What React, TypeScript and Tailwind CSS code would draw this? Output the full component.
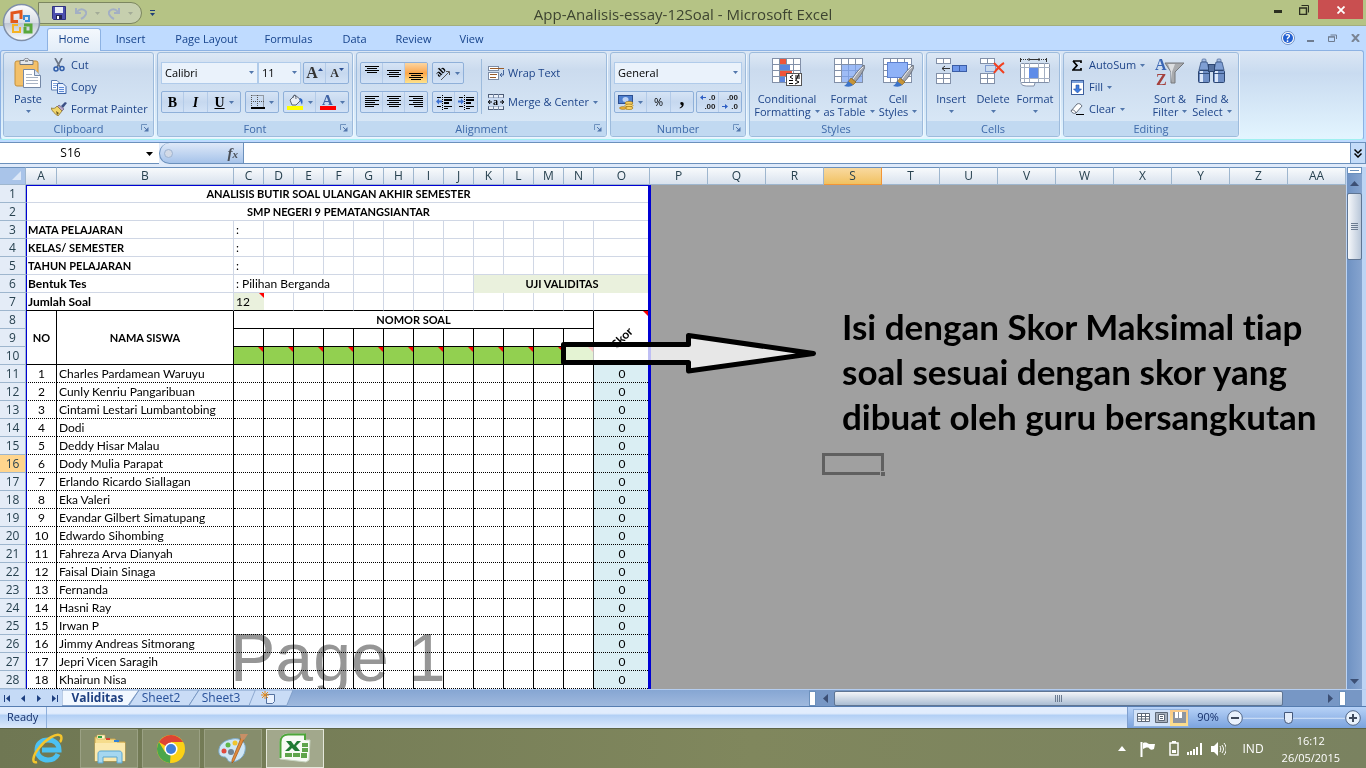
import React, { type ReactNode } from "react"

const students: string[] = [
    "Charles Pardamean Waruyu",
    "Cunly Kenriu Pangaribuan",
    "Cintami Lestari Lumbantobing",
    "Dodi",
    "Deddy Hisar Malau",
    "Dody Mulia Parapat",
    "Erlando Ricardo Siallagan",
    "Eka Valeri",
    "Evandar Gilbert Simatupang",
    "Edwardo Sihombing",
    "Fahreza Arva Dianyah",
    "Faisal Diain Sinaga",
    "Fernanda",
    "Hasni Ray",
    "Irwan P",
    "Jimmy Andreas Sitmorang",
    "Jepri Vicen Saragih",
    "Khairun Nisa",
]

const answerColumns = ["C", "D", "E", "F", "G", "H", "I", "J", "K", "L", "M", "N"]
const outsideColumns = ["P", "Q", "R", "S", "T", "U", "V", "W", "X", "Y", "Z", "AA"]
const headerColumns = ["A", "B", ...answerColumns, "O", ...outsideColumns]

const menuTabs = [
    { label: "Insert", width: "w-[58px]" },
    { label: "Page Layout", width: "w-[94px]" },
    { label: "Formulas", width: "w-[70px]" },
    { label: "Data", width: "w-[62px]" },
    { label: "Review", width: "w-[56px]" },
    { label: "View", width: "w-[60px]" },
]

/* ---------- small shared pieces ---------- */

const Caret = ({ className = "text-[#5277ac]" }: { className?: string }) => (
    <svg width="5" height="3" viewBox="0 0 5 3" className={`shrink-0 ${className}`}>
        <path d="M0 0h5L2.500 3z" fill="currentColor" />
    </svg>
)

const Launcher = () => (
    <svg width="8" height="8" viewBox="0 0 8 8" fill="none">
        <path d="M.5 6V.5H6" stroke="#6f93bf" />
        <path d="M3 3l3 3" stroke="#5277ac" />
        <path d="M7.500 3v4.500H3z" fill="#5277ac" />
    </svg>
)

interface GroupProps {
    label: string
    width: string
    launcher?: boolean
    children: ReactNode
}

const Group = ({ label, width, launcher, children }: GroupProps) => (
    <section className={`${width} flex h-[85px] shrink-0 flex-col overflow-hidden rounded-[3px] border border-[#9dbbdc] bg-linear-to-b from-[#dde8f5] via-[#cbdbee] via-20% to-[#dbeaf8] shadow-[1px_1px_0_#eef6fe]`}>
        <div className="flex flex-1 px-[3px] pt-px">{children}</div>
        <div className="relative flex h-[15px] items-center justify-center bg-[#c1d9f1] pt-px text-[11px] text-[#3e6aaa]">
            {label}
            {launcher && (
                <button aria-label={`${label} options`} className="absolute right-1 top-[3px]">
                    <Launcher />
                </button>
            )}
        </div>
    </section>
)

const ButtonBox = ({ children }: { children: ReactNode }) => (
    <div className="flex h-[22px] divide-x divide-[#b4cbe8] rounded-[2px] border border-[#8fb0d9] bg-linear-to-b from-[#d6e4f5] via-[#c6d8ef] to-[#d2e2f6]">
        {children}
    </div>
)

interface ToolProps {
    label: string
    width?: string
    active?: boolean
    caret?: boolean
    children: ReactNode
}

const Tool = ({ label, width = "w-[22px]", active, caret, children }: ToolProps) => (
    <button
        aria-label={label}
        className={`${width} flex items-center justify-center gap-1 text-black ${active ? "bg-linear-to-b from-[#fbd5a0] via-[#fba648] to-[#fde38c]" : ""}`}
    >
        {children}
        {caret && <Caret />}
    </button>
)

const SmallButton = ({ label, icon, caret }: { label: string, icon: ReactNode, caret?: boolean }) => (
    <button className="flex h-[22px] items-center gap-1 whitespace-nowrap">
        <span className="flex w-4 justify-center">{icon}</span>
        {label}
        {caret && <Caret />}
    </button>
)

const LargeButton = ({ lines, icon, width }: { lines: string[], icon: ReactNode, width: string }) => (
    <button className={`${width} flex shrink-0 flex-col items-center pt-[4px] leading-[13px]`}>
        <span className="flex h-[34px] items-start">{icon}</span>
        <span className="whitespace-nowrap">{lines[0]}</span>
        <span className="flex h-[13px] items-center gap-1 whitespace-nowrap">
            {lines[1]}
            <Caret />
        </span>
    </button>
)

const Combo = ({ label, value, width }: { label: string, value: string, width: string }) => (
    <label className={`${width} relative flex h-[22px]`}>
        <select
            aria-label={label}
            defaultValue={value}
            className="w-full appearance-none border border-[#b0cbea] bg-[#eaf2fb] px-[3px] text-[11px] text-black outline-none"
        >
            <option>{value}</option>
        </select>
        <span className="pointer-events-none absolute right-1 top-[9px]"><Caret /></span>
    </label>
)

/* ---------- ribbon icons ---------- */

const PasteIcon = () => (
    <svg width="28" height="32" viewBox="0 0 28 32">
        <rect x="1" y="3" width="23" height="25" rx="2" fill="#f3c069" stroke="#c4903c" />
        <path d="M6 2.500h4c0-3 5-3 5 0h4v4H6z" fill="#e4e7ec" stroke="#6f7681" />
        <path d="M11 3h3" stroke="#555" />
        <path d="M9.500 11.500h11l6 6v12h-17z" fill="#fff" stroke="#7488a6" />
        <path d="M20.500 11.500v6h6" fill="#dce6f4" stroke="#7488a6" />
        <path d="M12 16.500h6M12 19.500h12M12 22.500h12M12 25.500h12" stroke="#a9b4c4" />
    </svg>
)

const CutIcon = () => (
    <svg width="12" height="14" viewBox="0 0 12 14" fill="none">
        <path d="M2 0l5 9M9 0L4 9" stroke="#6b7585" strokeWidth="1.600" />
        <circle cx="3" cy="11" r="2" stroke="#2f5ca8" strokeWidth="1.500" />
        <circle cx="9" cy="10.500" r="2" stroke="#2f5ca8" strokeWidth="1.500" />
    </svg>
)

const CopyIcon = () => (
    <svg width="16" height="14" viewBox="0 0 16 14">
        <path d="M.5.5H6l3 3v6.500H.5z" fill="#fff" stroke="#5b7cb1" />
        <path d="M2 3.500h4M2 5.500h4M2 7.500h3" stroke="#7fa3dd" />
        <path d="M6.500 3.500H12l3 3v7H6.500z" fill="#eaf2ff" stroke="#3f66a8" />
        <path d="M8 7.500h5M8 9.500h5M8 11.500h5" stroke="#5c8ad6" />
    </svg>
)

const PainterIcon = () => (
    <svg width="16" height="14" viewBox="0 0 16 14">
        <path d="M10 4l4-4 2 1-4 5z" fill="#3b4f85" />
        <path d="M8 3l5 4-2 2-5-4z" fill="#b9a7c9" stroke="#66597a" strokeWidth=".7" />
        <path d="M6 4l5 5-4 5C4 12 1 9 0 6c3 1 5 0 6-2z" fill="#f1d56a" stroke="#8b7430" strokeWidth=".8" />
        <path d="M5 9l3 2-2 2z" fill="#6b5821" />
    </svg>
)

const Lines = ({ rows, y }: { rows: [number, number][], y: number }) => (
    <svg width="14" height="14" viewBox="0 0 14 14">
        {rows.map(([x, w], idx) => (
            <rect key={idx} x={x} y={y + idx * 2} width={w} height="1" fill="#000" />
        ))}
    </svg>
)

const shortRows: [number, number][] = [[0, 14], [2, 10], [0, 14], [2, 10]]
const leftRows: [number, number][] = [[0, 14], [0, 10], [0, 14], [0, 10], [0, 14], [0, 9]]
const centerRows: [number, number][] = [[0, 14], [2, 10], [0, 14], [2, 10], [0, 14], [2, 10]]
const rightRows: [number, number][] = [[0, 14], [4, 10], [0, 14], [4, 10], [0, 14], [5, 9]]

const IndentIcon = ({ out }: { out?: boolean }) => (
    <svg width="16" height="15" viewBox="0 0 16 15">
        <path d="M6.500 0v15" stroke="#000" strokeDasharray="1 1" />
        <path d="M1 2.500h4M8 2.500h8M1 11.500h4M8 11.500h8M8 13.500h4" stroke="#000" />
        <path d="M8 5h8M8 8h5" stroke="#000" strokeWidth="2" />
        {out
            ? <path d="M0 6.500L3 3.500v2h3v2H3v2z" fill="#3b6fd0" />
            : <path d="M6 6.500L3 3.500v2H0v2h3v2z" fill="#3b6fd0" />}
    </svg>
)

const OrientationIcon = () => (
    <svg width="15" height="15" viewBox="0 0 15 15" className="overflow-visible">
        <text x="1" y="9" fontSize="10" fontWeight="700" fontFamily="Liberation Serif, serif" transform="rotate(-45 5 8)">ab</text>
        <path d="M5 14l8-8M13.500 9V5.500H10" fill="none" stroke="#555" />
    </svg>
)

const BordersIcon = () => (
    <svg width="14" height="14" viewBox="0 0 14 14" fill="none">
        <path d="M.5.500h12v12M.5 0v12M6.500 0v12M0 6.500h13" stroke="#555" strokeDasharray="1 1" />
        <path d="M0 13h14" stroke="#000" strokeWidth="2" />
    </svg>
)

const FillIcon = () => (
    <svg width="17" height="16" viewBox="0 0 17 16">
        <path d="M3 6l5-5 6 5-5 5H5z" fill="#e8edf5" stroke="#5a6473" />
        <path d="M6 4c0-4 3-4 3 1" fill="none" stroke="#5a6473" />
        <path d="M13 4c3 1 3 3 2 7-1-2-1-4-3-5z" fill="#2d66c3" />
        <rect x="0" y="12" width="16" height="4" fill="#ffff00" />
    </svg>
)

const FontColorIcon = () => (
    <span className="flex flex-col items-center font-['Liberation_Serif',serif] text-[15px] leading-[12px] font-bold text-[#3f62a3]">
        A
        <span className="h-1 w-4 bg-[#ff0000]" />
    </span>
)

const WrapIcon = () => (
    <svg width="16" height="16" viewBox="0 0 16 16" fill="none">
        <rect x=".5" y="1.500" width="10" height="4" fill="#fff" stroke="#7c8ca6" />
        <path d="M2 3.500h14" stroke="#9a5b28" />
        <rect x=".5" y="7.500" width="10" height="7" fill="#fff" stroke="#7c8ca6" />
        <path d="M2 9.500h7M2 12.500h6" stroke="#9a5b28" />
        <path d="M15.500 5v5H12M14 8l-2 2 2 2" stroke="#44659b" />
    </svg>
)

const MergeIcon = () => (
    <svg width="16" height="16" viewBox="0 0 16 16">
        <rect x=".5" y=".5" width="15" height="15" fill="#e9f0fa" stroke="#4d5d78" />
        <path d="M5.500 0v4M10.500 0v4M5.500 12v4M10.500 12v4M0 4h16M0 12h16" stroke="#7789a6" />
        <rect x="0" y="4" width="16" height="8" fill="#c9daf2" />
        <path d="M0 8h4M2 6L.5 8 2 10M16 8h-4M14 6l1.500 2-1.500 2" fill="none" stroke="#000" />
        <text x="5" y="11" fontSize="10" fontWeight="700" fontFamily="Liberation Serif, serif">a</text>
    </svg>
)

const CurrencyIcon = () => (
    <svg width="16" height="15" viewBox="0 0 16 15">
        <rect x=".5" y=".5" width="14" height="8" fill="#4f7fce" stroke="#2c4f92" />
        <ellipse cx="7.500" cy="4.500" rx="3" ry="2.500" fill="#bcd2f6" />
        <ellipse cx="11" cy="8" rx="4" ry="1.500" fill="#ffd86b" stroke="#9c7212" strokeWidth=".7" />
        <ellipse cx="11" cy="10.500" rx="4" ry="1.500" fill="#ffd86b" stroke="#9c7212" strokeWidth=".7" />
        <ellipse cx="11" cy="13" rx="4" ry="1.500" fill="#ffd86b" stroke="#9c7212" strokeWidth=".7" />
        <ellipse cx="5" cy="13" rx="3.500" ry="1.300" fill="#f4b73c" stroke="#9c7212" strokeWidth=".7" />
    </svg>
)

const DecimalIcon = ({ more }: { more?: boolean }) => (
    <span className="relative flex w-4 flex-col font-['Liberation_Sans',sans-serif] text-[8px] leading-[9px] font-bold text-[#222]">
        <span className="self-end">{more ? ".0" : ".00"}</span>
        <span className="self-end">{more ? ".00" : ".0"}</span>
        <svg width="6" height="5" viewBox="0 0 6 5" className={more ? "absolute left-0 top-0.5" : "absolute left-0 bottom-0.5"}>
            <path d={more ? "M0 2.500L3 0v2h3v1H3v2z" : "M6 2.500L3 0v2H0v1h3v2z"} fill="#2f5fc4" />
        </svg>
    </span>
)

const Grid = ({ x = 0, y = 0, cols, rows, cw, ch }: { x?: number, y?: number, cols: number, rows: number, cw: number, ch: number }) => (
    <g>
        <rect x={x + 0.5} y={y + 0.5} width={cols * cw} height={rows * ch} fill="#fff" stroke="#8290a8" />
        {Array.from({ length: cols - 1 }, (_, i) => (
            <path key={`c${i}`} d={`M${x + 0.5 + (i + 1) * cw} ${y}v${rows * ch}`} stroke="#8290a8" />
        ))}
        {Array.from({ length: rows - 1 }, (_, i) => (
            <path key={`r${i}`} d={`M${x} ${y + 0.5 + (i + 1) * ch}h${cols * cw}`} stroke="#8290a8" />
        ))}
    </g>
)

const Brush = () => (
    <g>
        <path d="M30 7c-4 3-9 9-12 14l3 3c4-4 8-10 10-15z" fill="#a6a9b0" stroke="#5e6470" strokeWidth=".8" />
        <path d="M29 9c-4 3-7 8-10 12" fill="none" stroke="#f2f3f5" />
        <path d="M17 20l5 4-3 3-5-3z" fill="#c79538" stroke="#7d5a1c" strokeWidth=".6" />
        <path d="M14 23l5 4c-2 2-5 2-9 1 2-1 3-3 4-5z" fill="#3d74c9" />
    </g>
)

const ConditionalIcon = () => (
    <svg width="30" height="29" viewBox="0 0 30 29">
        <Grid cols={4} rows={4} cw={7} ch={6} />
        <rect x="8" y="1" width="6" height="5" fill="#f0553a" />
        <rect x="8" y="7" width="10" height="5" fill="#5b86df" />
        <rect x="8" y="13" width="12" height="5" fill="#f0553a" />
        <rect x="8" y="19" width="5" height="5" fill="#5b86df" />
        <rect x="14.500" y="15.500" width="15" height="12" fill="#fff" stroke="#555" />
        <path d="M21 17l-3 2 3 2M17 22.500h4M17 25.500h4M23 18h5M23 20h5M27 16l-3 6M23 22l4 2-4 2" fill="none" stroke="#000" />
    </svg>
)

const TableIcon = () => (
    <svg width="31" height="29" viewBox="0 0 31 29">
        <Grid cols={4} rows={4} cw={7} ch={6} />
        <rect x="8" y="7" width="20" height="17" fill="#7ea6f3" opacity=".75" />
        <Brush />
    </svg>
)

const CellStylesIcon = () => (
    <svg width="31" height="29" viewBox="0 0 31 29">
        <Grid cols={4} rows={4} cw={7} ch={6} />
        <rect x="4.500" y="4.500" width="20" height="15" fill="#8fb2f7" stroke="#5c7fcf" />
        <Brush />
    </svg>
)

const InsertIcon = () => (
    <svg width="31" height="29" viewBox="0 0 31 29">
        <Grid cols={2} rows={1} cw={7} ch={5} />
        <Grid y={15} cols={2} rows={2} cw={7} ch={5} />
        <rect x="16.500" y="7.500" width="14" height="6" fill="#6e97ea" stroke="#3a5da6" />
        <path d="M23.500 7v7" stroke="#3a5da6" />
        <path d="M6 10.500h8M9 8l-3 2.500L9 13" fill="none" stroke="#333" />
    </svg>
)

const DeleteIcon = () => (
    <svg width="26" height="29" viewBox="0 0 26 29">
        <Grid cols={2} rows={1} cw={7} ch={5} />
        <Grid y={15} cols={2} rows={2} cw={7} ch={5} />
        <path d="M5.500 7.500h10v6h-10z" fill="none" stroke="#335db5" strokeDasharray="1 1" />
        <path d="M14 5c3 3 6 6 10 10M24 5c-4 2-7 6-10 10" fill="none" stroke="#f2401f" strokeWidth="2" />
    </svg>
)

const FormatIcon = () => (
    <svg width="31" height="30" viewBox="0 0 31 30">
        <path d="M1 1.500h26" stroke="#333" strokeDasharray="1 1" />
        <path d="M9 1.500h10M9 0v3M19 0v3M.5 0v4M26.500 0v4" stroke="#333" />
        <rect x=".5" y="5.500" width="29" height="19" rx="1" fill="#fff" stroke="#8290a8" />
        <path d="M4.500 5v19M9.500 5v19M18.500 5v19M24.500 5v19M0 9.500h30M0 20.500h30" stroke="#a4afc2" />
        <rect x="9" y="10" width="9" height="10" fill="#5f8ce8" />
        <path d="M1 25c0 3 6 3 6 3h7l1-3" fill="#fff" stroke="#8290a8" />
    </svg>
)

const SortIcon = () => (
    <svg width="30" height="30" viewBox="0 0 30 30" className="overflow-visible">
        <text x="0" y="12" fontSize="16" fontWeight="700" fontFamily="Liberation Serif, serif" fill="#3a66b4">A</text>
        <text x="1" y="27" fontSize="16" fontWeight="700" fontFamily="Liberation Serif, serif" fill="#a4403d">Z</text>
        <path d="M10 5h19l-9 9v11h-4V14z" fill="#a9abae" stroke="#76797d" />
        <path d="M13 6h7l-3 8v10l-1-10z" fill="#dcdee0" />
    </svg>
)

const FindIcon = () => (
    <svg width="28" height="28" viewBox="0 0 28 28">
        {[0, 15].map((x) => (
            <g key={x} transform={`translate(${x} 0)`}>
                <rect x="4" y="1" width="4" height="3" rx="1" fill="#a8bfe4" stroke="#4c6798" strokeWidth=".7" />
                <path d="M3 4h6l2 8H1z" fill="#7f9fd3" stroke="#35517f" strokeWidth=".8" />
                <rect x=".5" y="12.500" width="11" height="12" rx="1" fill="#6f8fc6" stroke="#2d4773" />
                <rect x="2" y="13" width="3" height="11" fill="#dbe7fa" />
                <path d="M1 15.500h10" stroke="#35517f" />
            </g>
        ))}
        <rect x="10.500" y="6.500" width="6" height="7" fill="#55719f" stroke="#2d4773" />
    </svg>
)

const SigmaIcon = () => (
    <svg width="11" height="11" viewBox="0 0 11 11">
        <path d="M1 1h8v2M1 1l4 4.500L1 10h8V8" fill="none" stroke="#000" strokeWidth="1.700" />
    </svg>
)

const FillDownIcon = () => (
    <svg width="13" height="15" viewBox="0 0 13 15">
        <rect x=".5" y=".5" width="12" height="14" fill="#fff" stroke="#3c5f9e" />
        <path d="M1 2h11" stroke="#7da2dc" strokeWidth="2" />
        <path d="M5 5h3v4h2.500l-4 4-4-4H5z" fill="#3e7ce0" stroke="#244f9f" strokeWidth=".6" />
    </svg>
)

const ClearIcon = () => (
    <svg width="14" height="12" viewBox="0 0 14 12">
        <path d="M1 8l6-7c2-1 4 0 5 2l-6 7c-2 1-4 0-5-2z" fill="#fff" stroke="#66707f" />
        <path d="M1 8c1-2 4-1 5 2" fill="none" stroke="#66707f" />
        <path d="M6 11.500h8" stroke="#000" />
    </svg>
)

/* ---------- window chrome ---------- */

const OfficeButton = () => (
    <button aria-label="Office" className="absolute left-[2px] top-[3px] z-10">
        <svg width="39" height="39" viewBox="0 0 39 39">
            <defs>
                <linearGradient id="orb" x1="0" y1="0" x2="0" y2="1">
                    <stop offset="0" stopColor="#fdfdfe" />
                    <stop offset=".5" stopColor="#d8dde5" />
                    <stop offset=".52" stopColor="#bec6d3" />
                    <stop offset="1" stopColor="#fbfdff" />
                </linearGradient>
            </defs>
            <circle cx="19.500" cy="19.500" r="18" fill="url(#orb)" stroke="#7f8fa8" strokeWidth="1.500" />
            <g fill="none" strokeWidth="3">
                <path d="M16 18.500h-6V10l9-1.500V16" stroke="#e2571b" />
                <path d="M22 17v-4h5v5h-4" stroke="#3c8ed8" strokeWidth="2" />
                <path d="M16 22h-5v7h7v-5" stroke="#f5b324" strokeWidth="2" />
                <path d="M22 22h7v7h-6v-5" stroke="#59a83b" />
            </g>
        </svg>
    </button>
)

const TitleBar = () => (
    <header className="relative flex h-[26px] border-b border-[#a3ae7d] bg-[#b5c385]">
        <div className="ml-[38px] mt-[2px] flex h-[22px] w-[104px] items-center rounded-r-full border border-[#7c8660] bg-[#c6cfae] pl-[13px]">
            <button aria-label="Save">
                <svg width="14" height="14" viewBox="0 0 14 14">
                    <path d="M.5.500h13v13h-12l-1-1z" fill="#4c4fae" stroke="#2f327f" />
                    <rect x="3" y="1" width="8" height="6" fill="#e8edf8" />
                    <rect x="4" y="9" width="6" height="4" fill="#22244e" />
                    <rect x="5" y="10" width="2" height="3" fill="#fff" />
                </svg>
            </button>
            <button aria-label="Undo" className="ml-[9px] flex items-center gap-2">
                <svg width="12" height="13" viewBox="0 0 12 13" fill="none">
                    <path d="M1 1v5h5M2 5c4-5 10-2 9 2-1 3-3 4-5 5" stroke="#a3afc4" strokeWidth="2" />
                </svg>
                <Caret className="text-[#a3ab98]" />
            </button>
            <button aria-label="Redo" className="ml-2 flex items-center gap-2">
                <svg width="12" height="13" viewBox="0 0 12 13" fill="none">
                    <path d="M11 1v5H6M10 5C6 0 0 3 1 7c1 3 3 4 5 5" stroke="#a3afc4" strokeWidth="2" />
                </svg>
                <Caret className="text-[#a3ab98]" />
            </button>
        </div>
        <button aria-label="Customize Quick Access Toolbar" className="ml-2 flex flex-col items-center justify-center gap-0.5">
            <span className="h-px w-[5px] bg-[#1f3f78]" />
            <Caret className="text-[#1f3f78]" />
        </button>
        <h1 className="absolute inset-x-0 top-1 text-center text-[15px] leading-5 text-[#3d4430]">App-Analisis-essay-12Soal - Microsoft Excel</h1>
        <div className="relative ml-auto mr-[3px] flex h-[19px] items-center">
            <button aria-label="Minimize" className="mr-[17px] mt-1 h-[3px] w-2 bg-[#2b2f20]" />
            <button aria-label="Restore" className="mr-[9px]">
                <svg width="10" height="10" viewBox="0 0 10 10" fill="none" stroke="#2b2f20">
                    <path d="M.5 3h7v6.500h-7zM0 3h8" strokeWidth="1.500" />
                    <path d="M2.500.5h7v7" />
                </svg>
            </button>
            <button aria-label="Close" className="flex h-[19px] w-[45px] items-center justify-center bg-[#c94f50]">
                <svg width="8" height="8" viewBox="0 0 8 8"><path d="M.5.5l7 7M7.500.5l-7 7" stroke="#fff" strokeWidth="1.800" /></svg>
            </button>
        </div>
    </header>
)

const MenuTabs = () => (
    <nav className="flex h-6 items-end bg-[#bfdbff] pl-[47px] text-[11px] text-[#15428b]">
        <button className="relative z-10 -mb-px h-[23px] w-[54px] rounded-t-[3px] border border-b-0 border-[#8db2e3] bg-linear-to-b from-[#f4f8fd] to-[#e3edf8] pb-[2px]">Home</button>
        {menuTabs.map((tab) => (
            <button key={tab.label} className={`${tab.width} h-[23px] pl-px pt-px`}>{tab.label}</button>
        ))}
        <div className="ml-auto flex h-6 items-center pr-[6px]">
            <button aria-label="Help" className="mr-3">
                <svg width="14" height="14" viewBox="0 0 14 14">
                    <circle cx="7" cy="7" r="6.500" fill="#fff" stroke="#6d8fc4" />
                    <circle cx="7" cy="7" r="5" fill="#2360d2" />
                    <text x="7" y="11" fontSize="10" fontWeight="700" textAnchor="middle" fill="#fff">?</text>
                </svg>
            </button>
            <button aria-label="Minimize workbook" className="mr-[14px] mt-[6px] h-[2px] w-[7px] bg-[#6f7c90]" />
            <button aria-label="Restore workbook" className="mr-[14px]">
                <svg width="9" height="8" viewBox="0 0 9 8" fill="none" stroke="#6f7c90">
                    <path d="M.5 3h6v4.500h-6zM0 2.800h7M2.500 1h6v4" />
                </svg>
            </button>
            <button aria-label="Close workbook">
                <svg width="9" height="8" viewBox="0 0 9 8"><path d="M1 0l7 8M8 0L1 8" stroke="#7a8494" strokeWidth="2" /></svg>
            </button>
        </div>
    </nav>
)

const Ribbon = () => (
    <div className="bg-[#bfdbff] pb-[2px]">
        <div className="mr-[2px] flex h-[90px] gap-[3px] rounded-[3px] border border-[#8db2e3] border-b-[#9ff0f0] bg-linear-to-b from-[#dbe6f4] via-[#c9dbf0] via-25% to-[#e3f5ff] pl-[2px] pt-px text-[11px] text-[#1d4489]">
            <Group label="Clipboard" width="w-[151px]" launcher>
                <LargeButton width="w-[42px]" lines={["Paste", ""]} icon={<PasteIcon />} />
                <div className="pl-[2px]">
                    <SmallButton label="Cut" icon={<CutIcon />} />
                    <SmallButton label="Copy" icon={<CopyIcon />} />
                    <SmallButton label="Format Painter" icon={<PainterIcon />} />
                </div>
            </Group>
            <Group label="Font" width="w-[196px]" launcher>
                <div className="flex flex-1 flex-col gap-[7px] pt-[8px]">
                    <div className="flex">
                        <Combo label="Font name" value="Calibri" width="w-[97px]" />
                        <Combo label="Font size" value="11" width="w-[43px]" />
                        <div className="ml-auto">
                            <ButtonBox>
                                <Tool label="Grow font">
                                    <span className="font-['Liberation_Serif',serif] text-[16px] font-bold text-[#333]">A</span>
                                    <svg width="5" height="3" className="-ml-1 mb-2"><path d="M0 3h5L2.500 0z" fill="#2c4f92" /></svg>
                                </Tool>
                                <Tool label="Shrink font">
                                    <span className="font-['Liberation_Serif',serif] text-[12px] font-bold text-[#333]">A</span>
                                    <svg width="5" height="3" className="-ml-1 mb-2"><path d="M0 0h5L2.500 3z" fill="#2c4f92" /></svg>
                                </Tool>
                            </ButtonBox>
                        </div>
                    </div>
                    <div className="flex justify-between font-['Liberation_Serif',serif] text-[14px] font-bold">
                        <ButtonBox>
                            <Tool label="Bold">B</Tool>
                            <Tool label="Italic" width="w-6"><i>I</i></Tool>
                            <Tool label="Underline" width="w-8" caret><u>U</u></Tool>
                        </ButtonBox>
                        <ButtonBox>
                            <Tool label="Borders" width="w-8" caret><BordersIcon /></Tool>
                        </ButtonBox>
                        <ButtonBox>
                            <Tool label="Fill color" width="w-8" caret><FillIcon /></Tool>
                            <Tool label="Font color" width="w-8" caret><FontColorIcon /></Tool>
                        </ButtonBox>
                    </div>
                </div>
            </Group>
            <Group label="Alignment" width="w-[251px]" launcher>
                <div className="mb-[7px] mt-[5px] flex w-[122px] flex-col gap-[7px] border-r border-[#9dbbdc] pt-[3px]">
                    <div className="flex gap-1">
                        <ButtonBox>
                            <Tool label="Top align"><Lines rows={shortRows} y={0} /></Tool>
                            <Tool label="Middle align"><Lines rows={shortRows} y={4} /></Tool>
                            <Tool label="Bottom align" active><Lines rows={shortRows} y={7} /></Tool>
                        </ButtonBox>
                        <ButtonBox>
                            <Tool label="Orientation" width="w-[30px]" caret><OrientationIcon /></Tool>
                        </ButtonBox>
                    </div>
                    <div className="flex gap-1">
                        <ButtonBox>
                            <Tool label="Align left"><Lines rows={leftRows} y={1} /></Tool>
                            <Tool label="Align center"><Lines rows={centerRows} y={1} /></Tool>
                            <Tool label="Align right"><Lines rows={rightRows} y={1} /></Tool>
                        </ButtonBox>
                        <ButtonBox>
                            <Tool label="Decrease indent"><IndentIcon out /></Tool>
                            <Tool label="Increase indent"><IndentIcon /></Tool>
                        </ButtonBox>
                    </div>
                </div>
                <div className="flex flex-col gap-[7px] pl-[6px] pt-[8px]">
                    <SmallButton label="Wrap Text" icon={<WrapIcon />} />
                    <SmallButton label="Merge & Center" icon={<MergeIcon />} caret />
                </div>
            </Group>
            <Group label="Number" width="w-[136px]" launcher>
                <div className="flex flex-1 flex-col gap-[7px] pt-[8px]">
                    <Combo label="Number format" value="General" width="w-full" />
                    <div className="flex justify-between">
                        <ButtonBox>
                            <Tool label="Accounting format" width="w-8" caret><CurrencyIcon /></Tool>
                            <Tool label="Percent" width="w-6">%</Tool>
                            <Tool label="Comma"><b className="pb-2 font-['Liberation_Serif',serif] text-[20px] leading-3">,</b></Tool>
                        </ButtonBox>
                        <ButtonBox>
                            <Tool label="Increase decimal"><DecimalIcon more /></Tool>
                            <Tool label="Decrease decimal"><DecimalIcon /></Tool>
                        </ButtonBox>
                    </div>
                </div>
            </Group>
            <Group label="Styles" width="w-[174px]">
                <LargeButton width="w-[68px]" lines={["Conditional", "Formatting"]} icon={<ConditionalIcon />} />
                <LargeButton width="w-[56px]" lines={["Format", "as Table"]} icon={<TableIcon />} />
                <LargeButton width="w-[42px]" lines={["Cell", "Styles"]} icon={<CellStylesIcon />} />
            </Group>
            <Group label="Cells" width="w-[134px]">
                <LargeButton width="w-[42px]" lines={["Insert", ""]} icon={<InsertIcon />} />
                <LargeButton width="w-[42px]" lines={["Delete", ""]} icon={<DeleteIcon />} />
                <LargeButton width="w-[42px]" lines={["Format", ""]} icon={<FormatIcon />} />
            </Group>
            <Group label="Editing" width="w-[176px]">
                <div className="w-[82px] pl-[2px]">
                    <SmallButton label="AutoSum" icon={<SigmaIcon />} caret />
                    <SmallButton label="Fill" icon={<FillDownIcon />} caret />
                    <SmallButton label="Clear" icon={<ClearIcon />} caret />
                </div>
                <LargeButton width="w-[42px]" lines={["Sort &", "Filter"]} icon={<SortIcon />} />
                <LargeButton width="w-[42px]" lines={["Find &", "Select"]} icon={<FindIcon />} />
            </Group>
        </div>
    </div>
)

const FormulaBar = () => (
    <div className="flex h-[25px] border-t border-[#6b90bc] bg-[#dfeafa] pb-[3px]">
        <label className="relative flex w-[159px] border-b border-[#6b90bc] bg-white">
            <input aria-label="Name box" defaultValue="S16" className="w-[141px] bg-transparent text-center text-[12px] text-black outline-none" />
            <svg width="7" height="4" viewBox="0 0 7 4" className="absolute left-[146px] top-[9px]"><path d="M0 0h7L3.500 4z" /></svg>
        </label>
        <div className="flex w-[85px] items-center justify-between rounded-l-full border border-t-0 border-[#6b90bc] bg-linear-to-b from-[#dfe9f8] to-[#a6c3ea] pl-1 pr-[5px]">
            <span className="size-[9px] rounded-full border border-[#9fb4d1] bg-[#d3dae6]" />
            <button aria-label="Insert function" className="font-['Liberation_Serif',serif] text-[15px] leading-5 font-bold text-[#4a4f58] italic">f<span className="text-[11px]">x</span></button>
        </div>
        <input aria-label="Formula" className="flex-1 border-b border-[#6b90bc] bg-white outline-none" />
        <button aria-label="Expand formula bar" className="flex w-4 items-center justify-center border border-t-0 border-[#6b90bc] bg-[#c4dcf9]">
            <svg width="8" height="9" viewBox="0 0 8 9" fill="none" stroke="#000" strokeWidth="1.500"><path d="M.5.500L4 4l3.500-3.500M.5 4.500L4 8l3.500-3.500" /></svg>
        </button>
    </div>
)

/* ---------- worksheet ---------- */

const gridLine = "border-r border-b border-[#d0d7e5]"
const solid = "border-r border-b border-black"
const capital = "text-center text-[11px] font-bold"

// last printed column carries the right part of the page break line
const pageEdge = "relative border-l border-[#0000d4] bg-[#a0a0a0] shadow-[-2px_0_0_#0000d4]"

const Note = () => (
    <svg width="5" height="5" viewBox="0 0 5 5" className="absolute right-0 top-0"><path d="M0 0h5v5z" fill="#ff0000" /></svg>
)

const RowHead = ({ n }: { n: number }) => (
    <th className={`border-r border-b border-[#9eb6ce] text-center font-['Open_Sans',sans-serif] font-normal text-[#27414f] ${n === 16 ? "bg-[#ffd58d]" : "bg-[#e4ecf7]"}`}>{n}</th>
)

const Outside = ({ n }: { n: number }) => {
    if (n !== 16) {
        return <td colSpan={12} className={pageEdge} />
    }
    return (
        <>
            <td colSpan={3} className={pageEdge} />
            <td className="relative z-10 bg-[#a0a0a0]">
                <span className="absolute -inset-x-[2px] -inset-y-[2px] border-[3px] border-[#606060]" />
                <span className="absolute -right-[3px] -bottom-[3px] size-[5px] border-t border-l border-[#a0a0a0] bg-[#606060]" />
            </td>
            <td colSpan={8} className="bg-[#a0a0a0]" />
        </>
    )
}

const SheetTable = () => (
    <table className="w-full table-fixed border-separate border-spacing-0 bg-white font-['Lato',sans-serif] text-[12px] leading-[17px] text-black [&_td]:p-0 [&_th]:p-0">
        <colgroup>
            <col className="w-[26px]" />
            <col className="w-[31px]" />
            <col className="w-[177px]" />
            {answerColumns.map((c) => <col key={c} className="w-[30px]" />)}
            <col className="w-[56px]" />
            {outsideColumns.map((c) => <col key={c} className={c === "AA" ? "" : "w-[58px]"} />)}
        </colgroup>
        <thead>
            <tr className="h-[18px] font-['Open_Sans',sans-serif] text-[#27414f]">
                <th className="relative border-t border-r border-b border-[#9eb6ce] border-t-[#6b90bc] bg-[#a9c4e9]">
                    <svg width="9" height="9" viewBox="0 0 9 9" className="absolute right-1 bottom-1"><path d="M9 0v9H0z" fill="#dce7f7" /></svg>
                </th>
                {headerColumns.map((c) => (
                    <th
                        key={c}
                        className={`border-t border-r border-b border-t-[#6b90bc] text-center leading-4 font-normal ${c === "S" ? "border-[#f29536] bg-linear-to-b from-[#f9d99f] to-[#f1c15f]" : "border-[#9eb6ce] bg-linear-to-b from-[#f8fafc] to-[#d9e2ee]"}`}
                    >
                        {c}
                    </th>
                ))}
            </tr>
        </thead>
        <tbody>
            <tr className="h-[18px]">
                <RowHead n={1} />
                <td colSpan={15} className={`border-t border-b border-l border-[#0000d4] border-b-[#d0d7e5] leading-4 ${capital}`}>ANALISIS BUTIR SOAL ULANGAN AKHIR SEMESTER</td>
                <Outside n={1} />
            </tr>
            <tr className="h-[18px]">
                <RowHead n={2} />
                <td colSpan={15} className={`border-b border-l border-[#0000d4] border-b-[#d0d7e5] ${capital}`}>SMP NEGERI 9 PEMATANGSIANTAR</td>
                <Outside n={2} />
            </tr>
            {["MATA PELAJARAN", "KELAS/ SEMESTER", "TAHUN PELAJARAN"].map((title, idx) => (
                <tr key={title} className="h-[18px]">
                    <RowHead n={idx + 3} />
                    <td colSpan={2} className={`${gridLine} border-l border-l-[#0000d4] text-[11px]`}><b className="pl-px">{title}</b></td>
                    {answerColumns.map((c) => (
                        <td key={c} className={gridLine}>{c === "C" && <span className="pl-[2px]">:</span>}</td>
                    ))}
                    <td className="border-b border-[#d0d7e5]" />
                    <Outside n={idx + 3} />
                </tr>
            ))}
            <tr className="h-[18px]">
                <RowHead n={6} />
                <td colSpan={2} className={`${gridLine} border-l border-l-[#0000d4]`}><b className="pl-px">Bentuk Tes</b></td>
                <td colSpan={4} className={`${gridLine} whitespace-nowrap`}><span className="pl-[2px]">: Pilihan Berganda</span></td>
                {["G", "H", "I", "J"].map((c) => <td key={c} className={gridLine} />)}
                <td colSpan={5} className={`border-b border-[#eaf1dd] bg-[#eaf1dd] ${capital}`}>UJI VALIDITAS</td>
                <Outside n={6} />
            </tr>
            <tr className="h-[18px]">
                <RowHead n={7} />
                <td colSpan={2} className="border-r border-b border-l border-[#d0d7e5] border-b-black border-l-[#0000d4]"><b className="pl-px">Jumlah Soal</b></td>
                <td className="relative border-b border-black bg-[#eaf1dd]"><span className="pl-[2px]">12</span><Note /></td>
                {answerColumns.slice(1).map((c) => <td key={c} className="border-r border-b border-[#d0d7e5] border-b-black" />)}
                <td className="border-b border-black" />
                <Outside n={7} />
            </tr>
            <tr className="h-[18px]">
                <RowHead n={8} />
                <td rowSpan={3} className={`${solid} border-l border-l-[#0000d4] ${capital}`}>NO</td>
                <td rowSpan={3} className={`${solid} ${capital}`}>NAMA SISWA</td>
                <td colSpan={12} className={`${solid} ${capital}`}>NOMOR SOAL</td>
                <td rowSpan={3} className="relative border-b border-black text-center font-bold">
                    <span className="inline-block -rotate-45">Skor</span>
                    <span className="absolute right-[2px] top-0 size-[5px]"><Note /></span>
                </td>
                <Outside n={8} />
            </tr>
            <tr className="h-[18px]">
                <RowHead n={9} />
                {answerColumns.map((c) => <td key={c} className={solid} />)}
                <Outside n={9} />
            </tr>
            <tr className="h-[18px]">
                <RowHead n={10} />
                {answerColumns.map((c) => <td key={c} className={`${solid} relative bg-[#92d050]`}><Note /></td>)}
                <Outside n={10} />
            </tr>
            {students.map((name, idx) => (
                <tr key={name} className="h-[18px]">
                    <RowHead n={idx + 11} />
                    <td className="border-r border-b border-l border-black border-b-black border-l-[#0000d4] text-center [border-bottom-style:dotted]">{idx + 1}</td>
                    <td className="border-r border-b border-black whitespace-nowrap [border-bottom-style:dotted]"><span className="pl-[2px]">{name}</span></td>
                    {answerColumns.map((c) => <td key={c} className="border-r border-b border-black [border-bottom-style:dotted]" />)}
                    <td className="border-b border-dotted border-black bg-[#daeef3] text-center">0</td>
                    <Outside n={idx + 11} />
                </tr>
            ))}
        </tbody>
    </table>
)

const Sheet = () => (
    <div className="flex border-b border-[#b4cdf0] bg-[#bcd4f4]">
        <div className="relative min-w-0 flex-1 overflow-hidden">
            <SheetTable />
            {/* page break watermark */}
            <span className="absolute left-[230px] top-[450px] font-['Liberation_Sans',sans-serif] text-[68px] leading-[80px] whitespace-nowrap text-[#969696] mix-blend-multiply">Page 1</span>
            {/* drawing objects on the sheet */}
            <svg width="258" height="44" viewBox="0 0 258 44" className="absolute left-[560px] top-[164px]">
                <path d="M3.500 13.500h125v-9l125 18-125 17.500v-8.500h-125z" fill="#fff" fillOpacity=".75" stroke="#000" strokeWidth="5" strokeLinejoin="round" />
            </svg>
            <p className="absolute left-[842px] top-[137px] font-['Lato',sans-serif] text-[35px] leading-[45px] font-bold whitespace-nowrap text-black [font-variant-ligatures:none]">
                Isi dengan Skor Maksimal tiap<br />
                soal sesuai dengan skor yang<br />
                dibuat oleh guru bersangkutan
            </p>
        </div>
        <div className="mr-1 flex w-4 flex-col border-l border-[#bcd4f4] bg-linear-to-r from-[#6f92c3] to-[#86a4cf]">
            <div className="h-[7px] border border-[#6b90bc] bg-white p-[2px]"><div className="h-px bg-[#6b90bc]" /></div>
            <button aria-label="Scroll up" className="flex h-[19px] items-center justify-center">
                <svg width="9" height="5" viewBox="0 0 9 5"><path d="M0 5h9L4.500 0z" fill="#3c4f74" /></svg>
            </button>
            <div className="flex h-[67px] flex-col items-center justify-center gap-px rounded-[2px] border border-[#5f7593] bg-linear-to-r from-[#f5f7fa] to-[#b9c7d9]">
                {[0, 1, 2, 3].map((i) => <span key={i} className="h-px w-[7px] bg-[#6b7b90]" />)}
            </div>
            <button aria-label="Scroll down" className="mt-auto flex h-4 items-center justify-center">
                <svg width="9" height="5" viewBox="0 0 9 5"><path d="M0 0h9L4.500 5z" fill="#3c4f74" /></svg>
            </button>
        </div>
    </div>
)

/* ---------- bottom bars ---------- */

const NavIcon = ({ d }: { d: string }) => (
    <svg width="7" height="7" viewBox="0 0 7 7"><path d={d} fill="#1d3f80" /></svg>
)

const SheetTab = ({ label, width, active }: { label: ReactNode, width: string, active?: boolean }) => (
    <button className={`${width} relative -mr-[10px] h-4 text-[12px] leading-4 ${active ? "z-10 font-bold text-[#1d3f80]" : "text-[#27509a]"}`}>
        <svg viewBox="0 0 70 16" preserveAspectRatio="none" className="absolute inset-0 h-full w-full">
            <path d={active ? "M0 0h70L60 15.500H0z" : "M10 0h60L60 15.500H0z"} fill={active ? "#f2f8ff" : "#c9dcf6"} stroke="#6f8fbd" strokeWidth=".8" />
        </svg>
        <span className="relative flex items-center justify-center pr-[6px]">{label}</span>
    </button>
)

const SheetBar = () => (
    <div className="flex h-[17px] border-b border-[#567db1] bg-linear-to-b from-[#86a6d3] to-[#9fb9de]">
        <div className="flex w-[62px] items-center justify-around bg-[#c5daf6]">
            <button aria-label="First sheet"><NavIcon d="M0 0h1v7H0zM6 0v7L2 3.500z" /></button>
            <button aria-label="Previous sheet"><NavIcon d="M5 0v7L1 3.500z" /></button>
            <button aria-label="Next sheet"><NavIcon d="M2 0v7l4-3.500z" /></button>
            <button aria-label="Last sheet"><NavIcon d="M1 0v7l4-3.500zM6 0h1v7H6z" /></button>
        </div>
        <SheetTab label="Validitas" width="w-[77px]" active />
        <SheetTab label="Sheet2" width="w-[70px]" />
        <SheetTab label="Sheet3" width="w-[70px]" />
        <SheetTab
            width="w-[44px]"
            label={
                <svg width="15" height="14" viewBox="0 0 15 14" role="img" aria-label="Insert worksheet">
                    <path d="M5.500 3.500h8v7l-2 2h-6z" fill="#eaf2ff" stroke="#53709f" />
                    <path d="M4 0v8M0 4h8M1 1l6 6M7 1L1 7" stroke="#e08a1c" />
                </svg>
            }
        />
        <div className="ml-auto flex w-[537px] items-center bg-[#7797c5]">
            <span className="h-[15px] w-[7px] shrink-0 border border-[#6b90bc] bg-white" />
            <button aria-label="Scroll left" className="flex w-[18px] shrink-0 justify-center">
                <svg width="5" height="9" viewBox="0 0 5 9"><path d="M5 0v9L0 4.500z" fill="#3c4f74" /></svg>
            </button>
            <div className="flex h-[15px] flex-1 items-center justify-center gap-px rounded-[2px] border border-[#5f7593] bg-linear-to-b from-[#f4f5f8] to-[#aabdd3]">
                {[0, 1, 2, 3].map((i) => <span key={i} className="h-[7px] w-px bg-[#6b7b90]" />)}
            </div>
            <button aria-label="Scroll right" className="flex w-[52px] shrink-0 justify-end pr-[2px]">
                <svg width="5" height="9" viewBox="0 0 5 9"><path d="M0 0v9l5-4.500z" fill="#3c4f74" /></svg>
            </button>
            <span className="ml-1 h-[15px] w-[7px] shrink-0 border border-[#6b90bc] bg-white" />
        </div>
        <div className="w-4 bg-[#7797c5]" />
        <div className="w-1 bg-[#bcd4f4]" />
    </div>
)

const ViewButton = ({ label, active, children }: { label: string, active?: boolean, children: ReactNode }) => (
    <button aria-label={label} className={`flex w-[18px] items-center justify-center ${active ? "bg-linear-to-b from-[#f9c987] to-[#fbe08e]" : ""}`}>
        <svg width="13" height="11" viewBox="0 0 13 11" fill="none" stroke="#5d6877">{children}</svg>
    </button>
)

const ZoomButton = ({ label, plus }: { label: string, plus?: boolean }) => (
    <button aria-label={label}>
        <svg width="16" height="16" viewBox="0 0 16 16">
            <circle cx="8" cy="8" r="7.300" fill="#e9f2fd" stroke="#54698a" />
            <path d={plus ? "M4 8h8M8 4v8" : "M4 8h8"} stroke="#3f4a5c" strokeWidth="2" />
        </svg>
    </button>
)

const StatusBar = () => (
    <footer className="flex h-[21px] items-center bg-linear-to-b from-[#e2edfd] from-30% via-[#b3d0f5] via-40% to-[#dce9fb] text-[11px] text-[#15306b]">
        <span className="flex h-full w-[47px] items-center border-r border-[#8fb0dc] pl-[7px]">Ready</span>
        <div className="ml-auto flex h-full w-[239px] items-center border-l border-[#7f9fce] bg-linear-to-b from-[#b7d2f7] to-[#7ba3dd] pl-[5px] pr-[5px]">
            <div className="flex h-[18px] border border-[#8fb0dc] bg-[#d3e3f8]">
                <ViewButton label="Normal"><path d="M.5 1.500h12v8H.5zM4.500 1v9M8.500 1v9M0 4.500h13M0 7h13" fill="#fff" /></ViewButton>
                <ViewButton label="Page layout"><path d="M.5.500h12v10H.5z" fill="#a7b0bd" /><path d="M3.500 2.500h6v6h-6zM5 4.500h3M5 6.500h3" fill="#fff" /></ViewButton>
                <ViewButton label="Page break preview" active><path d="M0 0h13v11H0z" fill="#8d95a1" stroke="none" /><path d="M2 0h3v6H2zM6 0h3v6H6z" fill="#fff" stroke="none" /></ViewButton>
            </div>
            <button className="w-[38px] text-center">90%</button>
            <ZoomButton label="Zoom out" />
            <input
                type="range"
                aria-label="Zoom"
                min={0}
                max={100}
                defaultValue={44}
                className="h-3 min-w-0 flex-1 appearance-none bg-linear-to-b from-transparent from-45% via-[#e9f2fd] via-50% to-transparent to-60% [&::-webkit-slider-thumb]:h-3 [&::-webkit-slider-thumb]:w-[9px] [&::-webkit-slider-thumb]:appearance-none [&::-webkit-slider-thumb]:rounded-b-full [&::-webkit-slider-thumb]:border [&::-webkit-slider-thumb]:border-[#44587c] [&::-webkit-slider-thumb]:bg-[#e3ecf9]"
            />
            <ZoomButton label="Zoom in" plus />
        </div>
    </footer>
)

const TaskButton = ({ label, state, children }: { label: string, state: string, children: ReactNode }) => (
    <button aria-label={label} className={`flex h-[39px] w-[58px] items-center justify-center border ${state}`}>{children}</button>
)

const Taskbar = () => (
    <div className="flex h-10 items-center border-t border-[#5d6446] bg-linear-to-r from-[#6f7753] via-[#80875d] via-55% to-[#7a8260] pl-[18px] text-white">
        <div className="flex gap-1">
            <TaskButton label="Internet Explorer" state="border-transparent">
                <svg width="32" height="32" viewBox="0 0 32 32" fill="none">
                    <path d="M27 21c-2 4-5 6-10 6-6 0-11-4-11-10S10 7 17 7s11 4 11 10H11" stroke="#4cc1f2" strokeWidth="5" />
                    <path d="M6 29c-6 2-4-7 2-14C15 6 26-1 30 3c1 2 0 5-1 6" stroke="#f4c52d" strokeWidth="2.500" />
                </svg>
            </TaskButton>
            <TaskButton label="File Explorer" state="border-[#9ba184] bg-[#868d6c]">
                <svg width="33" height="30" viewBox="0 0 33 30">
                    <path d="M2 3h9l2 2h9l2 3h8v19H2z" fill="#f5dc8c" stroke="#c9a44b" />
                    <path d="M4 1h8v4H4z" fill="#fff5cc" stroke="#c9a44b" strokeWidth=".6" />
                    <rect x="5" y="2" width="4" height="2" fill="#2ea043" />
                    <rect x="13" y="4" width="4" height="2" fill="#d94032" />
                    <rect x="21" y="6" width="5" height="2" fill="#3282d6" />
                    <path d="M2 9h30v18H2z" fill="#fbe9ae" />
                    <path d="M5 29V20c0-2 1-3 3-3h18c2 0 3 1 3 3v9h-5v-6H10v6z" fill="#a5d7f0" stroke="#5ba6cf" />
                </svg>
            </TaskButton>
            <TaskButton label="Google Chrome" state="border-[#9ba184] bg-[#868d6c]">
                <svg width="30" height="30" viewBox="0 0 30 30">
                    <circle cx="15" cy="15" r="14" fill="#fbd116" />
                    <path d="M15 15L2.900 8A14 14 0 0 1 27.100 8H15z" fill="#dd4433" />
                    <path d="M15 15l-1 14A14 14 0 0 1 2.900 8L9 18z" fill="#4aa64c" />
                    <circle cx="15" cy="15" r="6.500" fill="#fff" />
                    <circle cx="15" cy="15" r="5" fill="#3f7fd9" />
                </svg>
            </TaskButton>
            <TaskButton label="Paint" state="border-[#9ba184] bg-[#868d6c]">
                <svg width="32" height="31" viewBox="0 0 32 31">
                    <path d="M15 6c9-2 15 4 13 12-1 6-7 11-14 11-4 0-3-4-6-5-4 0-7-2-6-8C3 10 9 7 15 6z" fill="#cfe6f6" stroke="#7ba9c8" />
                    <circle cx="7" cy="18" r="2.500" fill="#e04a3e" />
                    <circle cx="11" cy="12" r="2.500" fill="#5fb648" />
                    <circle cx="18" cy="10" r="2.500" fill="#f0c52e" />
                    <circle cx="14" cy="19" r="3" fill="#6f8394" />
                    <path d="M27 6l-10 22-2 2 0-3L24 5z" fill="#e28b3c" stroke="#9b5518" strokeWidth=".7" />
                    <path d="M23 1l8 0-4 6-3-1z" fill="#c78f66" />
                </svg>
            </TaskButton>
            <TaskButton label="Microsoft Excel" state="border-[#e4e7da] bg-[#a2a88c]">
                <svg width="32" height="31" viewBox="0 0 32 31">
                    <path d="M8 1h18v6h5l-1 20-3 2-26-3V9c0-5 3-8 7-8z" fill="#f7faf5" stroke="#c9d6c2" />
                    <path d="M26 7V1.500H9C4 1.500 1.500 5 1.500 9v16" fill="none" stroke="#4da539" strokeWidth="2" />
                    <path d="M23 10h6v4h-6zM23 15h6v4h-6zM22 20h6v5h-6zM14 20h7v4h-7zM6 20h7v4H6z" fill="#5ea44b" />
                    <path d="M7 8h5l3 4 3-4h4l-5 5 4 5h-5l-3-3-3 3H6l5-5z" fill="#1f7a33" />
                </svg>
            </TaskButton>
        </div>
        <div className="ml-auto flex items-center pr-[26px]">
            <button aria-label="Show hidden icons" className="mr-[14px]"><svg width="8" height="5" viewBox="0 0 8 5"><path d="M0 5h8L4 0z" fill="#fff" /></svg></button>
            <button aria-label="Action Center" className="mr-3">
                <svg width="17" height="16" viewBox="0 0 17 16"><path d="M1.500 1v15" stroke="#fff" strokeWidth="2" /><path d="M3 2c3-1 4 0 6 1h6l-1 5c-2 1-4 1-5-1-2-1-4 0-6 1z" fill="#fff" /></svg>
            </button>
            <button aria-label="Battery" className="mr-2">
                <svg width="10" height="15" viewBox="0 0 10 15"><path d="M1 2h8v12H1z" fill="none" stroke="#fff" strokeWidth="1.500" /><path d="M3 0h4v2H3zM3 9h4v3H3z" fill="#fff" /></svg>
            </button>
            <button aria-label="Network" className="mr-2">
                <svg width="16" height="12" viewBox="0 0 16 12" fill="#fff"><path d="M0 9h2v3H0zM3 8h2v4H3zM6 6h2v6H6zM9 4h2v8H9zM13 0h2v12h-2z" /></svg>
            </button>
            <button aria-label="Volume" className="mr-[17px]">
                <svg width="15" height="14" viewBox="0 0 15 14"><path d="M0 4h3l4-4v14l-4-4H0z" fill="#fff" /><path d="M9 4c1 2 1 4 0 6M11 3c2 3 2 5 0 8M13 1c3 4 3 8 0 12" fill="none" stroke="#fff" /></svg>
            </button>
            <span className="mr-[18px] text-[12px]">IND</span>
            <time className="text-center text-[11px] leading-[17px]">16:12<br />26/05/2015</time>
        </div>
    </div>
)

const App = () => {
    return (
        <div className="relative flex min-h-screen flex-col overflow-hidden bg-[#7a8260] font-['Open_Sans',sans-serif]">
            <OfficeButton />
            <TitleBar />
            <MenuTabs />
            <Ribbon />
            <FormulaBar />
            <Sheet />
            <SheetBar />
            <StatusBar />
            <Taskbar />
        </div>
    )
}

export default App
